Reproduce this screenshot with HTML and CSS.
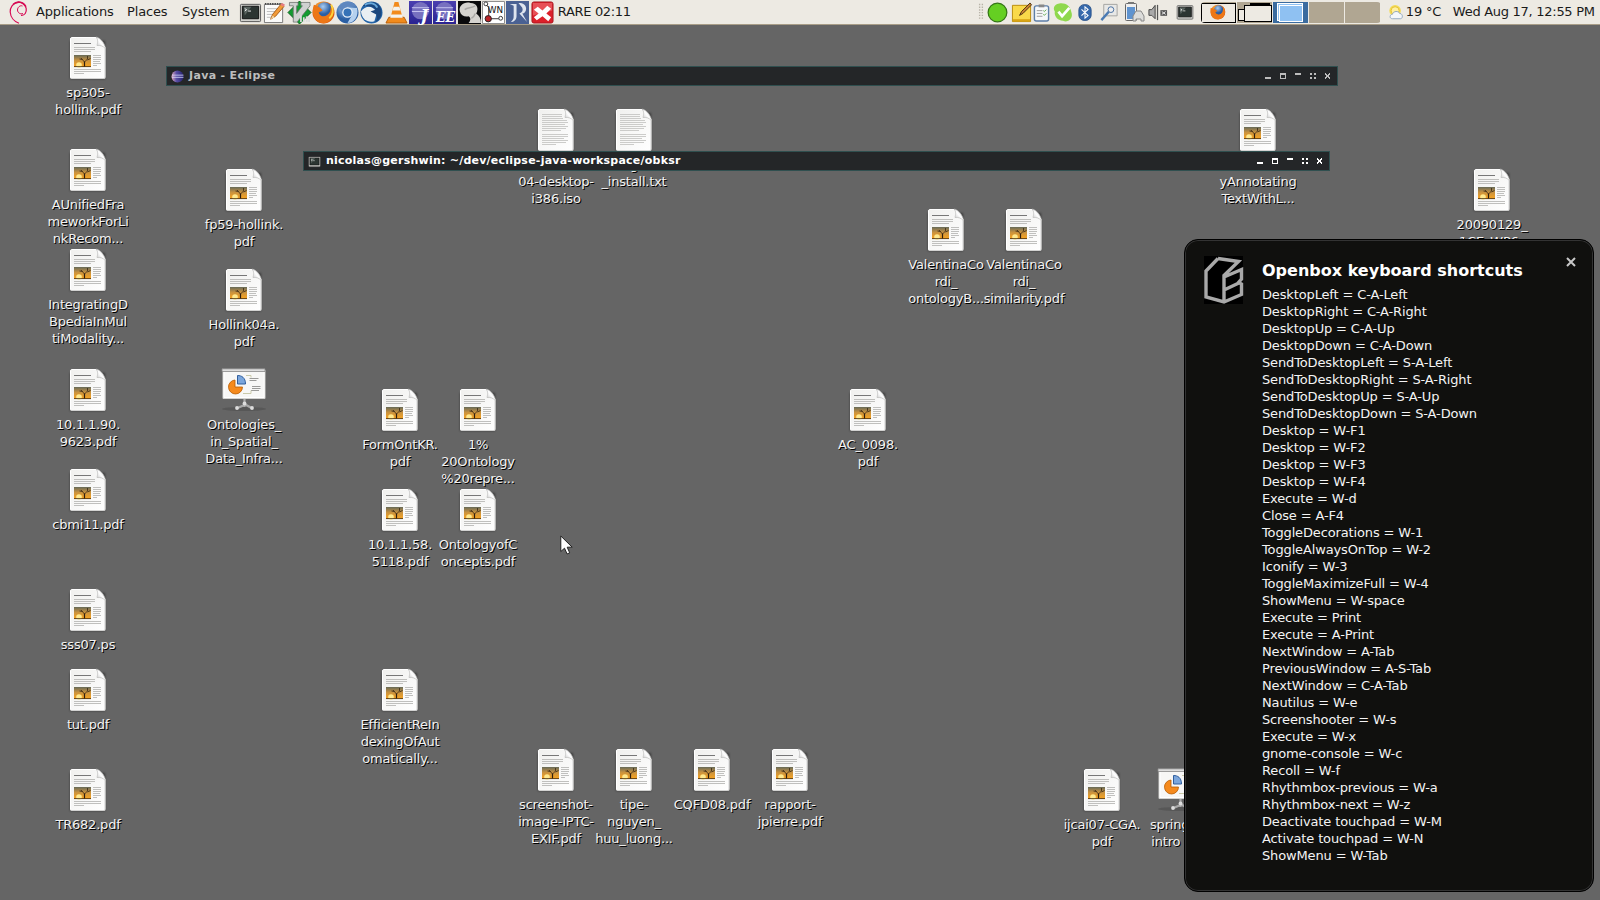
FILE: index.html
```html
<!DOCTYPE html>
<html lang="en">
<head>
<meta charset="utf-8">
<title>Desktop</title>
<link rel="stylesheet" href="styles.css">
</head>
<body>
<svg class="defs" width="0" height="0" aria-hidden="true">
  <defs>
    <linearGradient id="paper" x1="0" y1="0" x2="1" y2="1"><stop offset="0" stop-color="#f0f0ee"/><stop offset="1" stop-color="#fff"/></linearGradient>
    <linearGradient id="sunset" x1="0" y1="0" x2="0" y2="1"><stop offset="0" stop-color="#666a58"/><stop offset=".45" stop-color="#c9923e"/><stop offset="1" stop-color="#fba51f"/></linearGradient>
    <linearGradient id="curl" x1="0" y1="1" x2="1" y2="0"><stop offset="0" stop-color="#bbb"/><stop offset=".5" stop-color="#fff"/><stop offset="1" stop-color="#bbb"/></linearGradient>
    <linearGradient id="orb" x1="0" y1="0" x2="1" y2="0"><stop offset="0" stop-color="#e3a9c0"/><stop offset=".4" stop-color="#5a4fa5"/><stop offset="1" stop-color="#23206f"/></linearGradient>
    <radialGradient id="blue" cx=".4" cy=".3"><stop offset="0" stop-color="#a9cbf0"/><stop offset="1" stop-color="#2b5fa3"/></radialGradient>
    <radialGradient id="fire" cx=".4" cy=".3"><stop offset="0" stop-color="#ffc24a"/><stop offset="1" stop-color="#dc5a0c"/></radialGradient>
    <linearGradient id="tile" x1="0" y1="0" x2="0" y2="1"><stop offset="0" stop-color="#4a3fb0"/><stop offset="1" stop-color="#2a2391"/></linearGradient>
    <filter id="soft" x="-20%" y="-20%" width="140%" height="150%"><feGaussianBlur stdDeviation="1.2"/></filter>
    <symbol id="page" viewBox="0 0 48 48">
      <path d="M6 6h35v38H6z" fill="#000" opacity=".45" filter="url(#soft)"/>
      <path d="M7.500 2.500h24.500l9 10v29.500a1.500 1.500 0 0 1-1.500 1.500h-32a1.500 1.500 0 0 1-1-1.500v-38a1.500 1.500 0 0 1 1-1.500z" fill="url(#paper)" stroke="#fff"/>
      <path d="M6.500 43.500h34.500V13" fill="none" stroke="#c8c8c6" stroke-width=".8"/>
      <path d="M32 2c2.500 2.500 1.500 6 1 8.500 3-.5 6 .5 8.500 3C41 8 36 2.500 32 2z" fill="url(#curl)" stroke="#b5b5b3" stroke-width=".6"/>
    </symbol>
    <symbol id="doc" viewBox="0 0 48 48">
      <use href="#page"/>
      <path d="M10 8.500h17" stroke="#777"/>
      <path d="M10 12.500h21M10 14.500h21M10 16.500h17M29 20.500h8M29 22.500h8M29 24.500h8M29 26.500h7M29 28.500h8M29 30.500h4M10 34.500h27M10 36.500h27M10 38.500h10" stroke="#b9b9b7" stroke-width=".9"/>
      <path d="M10 20h17v12H10z" fill="url(#sunset)"/>
      <circle cx="15" cy="30" r="2.800" fill="#ffe98e"/>
      <path d="M10 31.600h17" stroke="#3a2713" stroke-width=".8"/>
      <path d="M20.500 31.500v-5" stroke="#2e1e10" stroke-width="1.200"/>
      <path d="M20.500 27l-3.500-4M20.500 27l3-3v-3M23.500 25l3-1.500M18.500 24.500l-3-.5" stroke="#3a2713" stroke-width=".8" fill="none"/>
    </symbol>
    <symbol id="txt" viewBox="0 0 48 48">
      <use href="#page"/>
      <path d="M10 7.500h20M10 9.500h20M10 11.500h21M10 13.500h25M10 15.500h26M10 17.500h23M10 19.500h26M10 21.500h24M10 23.500h19M10 27.500h26M10 29.500h26M10 31.500h22M10 33.500h26M10 35.500h24M10 37.500h14" stroke="#c6c6c4" stroke-width=".9"/>
    </symbol>
    <symbol id="slides" viewBox="0 0 48 48">
      <ellipse cx="24" cy="42" rx="22" ry="2" fill="#444" opacity=".4"/>
      <path d="M24.500 32v6l-7 3M24.500 37l7 4M24.500 38v2" stroke="#aaa" stroke-width="2.200" fill="none"/>
      <circle cx="17" cy="41" r="1.900" fill="#ddd"/><circle cx="32" cy="41" r="1.900" fill="#ddd"/><circle cx="24.500" cy="36.500" r="1.900" fill="#ddd"/>
      <path d="M3 3h42v28.500H3z" fill="#f7f7f6" stroke="#d0d0ce"/>
      <path d="M4 4h40v26.500H4z" fill="none" stroke="#fff"/>
      <path d="M2 1.800h43v2.700H2z" fill="#ddd" stroke="#888" stroke-width=".8"/>
      <path d="M15 13v7h7.500a7 7 0 1 1-7.500-7z" fill="#f58a1d" stroke="#b85c00" stroke-width=".8"/>
      <path d="M17.500 8.500c4 0 8 2 8 8.500h-8z" fill="#7ba6dc" stroke="#2f5e9e"/>
      <path d="M29.500 11.500h9M29.500 13.500h7M32 19.500h8.500M32 21.500h8.500M31 23.500h8" stroke="#9a9a98"/>
      <path d="M26 8.500h5v2M23 26.500h8v-3" fill="none" stroke="#c9c9a9"/>
    </symbol>
    <symbol id="term" viewBox="0 0 24 24">
      <rect x="1.500" y="3.500" width="21" height="18" rx="1" fill="#d3d3cf" stroke="#555"/>
      <path d="M3.500 5.500h17v13h-17z" fill="#2c3532" stroke="#111"/>
      <path d="M5 6h8l-7 9z" fill="#59635f"/><path d="M6 8l2 1-2 1.500M9.500 10.500h3" fill="none" stroke="#eee"/>
    </symbol>
    <symbol id="eclipse" viewBox="0 0 24 24">
      <circle cx="12" cy="12" r="11" fill="url(#orb)"/>
      <path d="M2 9.500h21M1.500 13.500h21.500" stroke="#d8d8fa" stroke-width="1.500"/>
    </symbol>
  </defs>
</svg>

<header class="panel">
  <svg class="debian" viewBox="0 0 20 24"><path d="M14 13.500c-2.500 1.200-5.500-.8-5.500-3.500s2.500-5 5-4" fill="none" stroke="#d70a53" stroke-width="1"/><path d="M12 15.300c3.800.4 5.800-3 5.200-6.800C16.500 4.500 12.500 1.600 8.500 2.300 3.800 3.200 1 7.500 1.200 12c.3 5 4 9.500 8.800 11.300" fill="none" stroke="#d70a53" stroke-width="1.200"/><path d="M4 4.500C8 .8 14.500 1.500 16.800 6.500" fill="none" stroke="#d70a53" stroke-width="1.600"/></svg>
  <nav class="menus"><span class="m-apps">Applications</span><span class="m-places">Places</span><span class="m-system">System</span></nav>
  <div class="launchers">
    <svg viewBox="0 0 24 24"><use href="#term"/></svg>
    <svg viewBox="0 0 24 24"><path d="M1.500 3.500h19v19h-19z" fill="#fbfbfa" stroke="#777"/><path d="M2 3h18" stroke="#444" stroke-width="2" stroke-dasharray="1.500 1"/><path d="M4 8h13M4 11h10M4 14h7M4 17h7" stroke="#bbb"/><path d="M8 19l2-5L19 3l3 2.500L13 16z" fill="#f29b38" stroke="#a75a13"/><path d="M18 4l2-2 3 2-1.500 2z" fill="#e57c80"/><path d="M8 19l2-4 2.500 2z" fill="#f1d3a0"/></svg>
    <svg viewBox="0 0 24 24"><path d="M12 0l12 12-12 12L0 12z" fill="#129b30" stroke="#075d1b"/><path d="M1.500 1.500h9v3.500H9v8l6-8h-1.500V1.500h9.500V5L9.500 22H5.500V5h-4z" fill="#cfd1d0" stroke="#6b706d" stroke-width=".8"/><path d="M13.500 15v7M16.500 22v-5M19.500 22v-5l2.500.5V22" stroke="#ddd" stroke-width="1.800" fill="none"/></svg>
    <svg viewBox="0 0 24 24"><circle cx="12" cy="12" r="11.500" fill="url(#fire)"/><circle cx="13" cy="9" r="7.800" fill="url(#blue)"/><path d="M2 4c4 1 8 4 9 6l-4 2c2 6 9 5 12-1l1-7c5 7 2 17-6 19C5 25-2 15 2 4z" fill="#ed7716"/><path d="M20 4c3 5 2 11-2 14" stroke="#ffd43c" stroke-width="2" fill="none"/></svg>
    <svg viewBox="0 0 24 24"><circle cx="12" cy="12" r="11.500" fill="url(#blue)"/><path d="M12 6h10A11 11 0 0 0 3 6l4 7z" fill="#5e87bf"/><path d="M17 14l-5 9c7 0 12-7 10-16h-8z" fill="#b5d1ef"/><circle cx="12" cy="12" r="5.500" fill="#e7f0fa"/><circle cx="12" cy="12" r="4.200" fill="#3572b7"/></svg>
    <svg viewBox="0 0 24 24"><circle cx="12" cy="12" r="11.500" fill="#2364a8"/><path d="M1 11c3-5 9-6 12-4l5 4-3 10c-6 2-13-1-14-10z" fill="#e9eff3"/><path d="M3 5C7-1 18 0 21 6c4 8-1 15-5 16 2-3 2-5 1-8l-6-3 5-2c-3-4-8-3-13-4z" fill="#1b477e"/><path d="M5 4c5-3 11-2 13 3" stroke="#67a9dc" stroke-width="2" fill="none"/></svg>
    <svg viewBox="0 0 24 24"><path d="M4 17h16l3 6H1z" fill="#f08b1c" stroke="#b75c08"/><path d="M10 1h4l5 19c-4 2-10 2-14 0z" fill="#f28b1d"/><path d="M9 6h6l1.200 4H7.800zM6.500 14h11l1 3.500h-13z" fill="#f4f3ef"/></svg>
    <svg viewBox="0 0 24 24"><path d="M0 0h24v24H0z" fill="url(#tile)"/><circle cx="12" cy="10" r="9" fill="#7770bf"/><path d="M3 7h18M3 11h18" stroke="#cac6f2"/><text x="12" y="21" class="ic-serif">J</text></svg>
    <svg viewBox="0 0 24 24"><path d="M0 0h24v24H0z" fill="url(#tile)"/><circle cx="12" cy="10" r="9" fill="#7770bf"/><path d="M3 7h18M3 11h18" stroke="#cac6f2"/><text x="3" y="22" class="ic-serif ic-ee" textLength="20" lengthAdjust="spacingAndGlyphs">EE</text></svg>
    <svg viewBox="0 0 24 24"><path d="M0 0h24v24H0z" fill="#0a0a0c"/><path d="M2 11c-2-6 5-11 11-9 7 0 9 6 6 11 3 2 5 5 5 10H11c3-3 2-6 0-7-4 1-8-1-9-5z" fill="#d5d3cf"/><path d="M7 9c3-3 7-1 11-4M14 18c2-1 3-2 4-5" stroke="#aaa8a5" stroke-width="1.500" fill="none"/></svg>
    <svg viewBox="0 0 24 24"><path d="M.5.500h23v23H.500z" fill="#fff" stroke="#888"/><path d="M4 3l3 4v13M8 18.500h12" stroke="#333" fill="none"/><circle cx="6.500" cy="18.500" r="3.300" fill="#ba2227" stroke="#222"/><circle cx="19.500" cy="18" r="2" fill="#fff" stroke="#333"/><circle cx="4" cy="3" r="2" fill="#fff" stroke="#333"/><text x="6" y="13" class="ic-wn" textLength="16" lengthAdjust="spacingAndGlyphs">WN</text></svg>
    <svg viewBox="0 0 24 24"><path d="M0 0h24v24H0z" fill="#4a6193"/><path d="M4 3h7v13c0 4-3 6-6 6 3-3 3-4 3-7V5zM13 2c5 0 8 2 8 6 0 3-2 5-4 5l5 9-8-9c3-1 4-3 3-6z" fill="#dfe5ef"/></svg>
    <svg viewBox="0 0 24 24"><rect x="1" y="1" width="22" height="22" rx="2" fill="#dc202a" stroke="#a71920"/><path d="M2 2h20v8L2 15z" fill="#ef7377" opacity=".6"/><path d="M3 9l4-3 5 4 5-5 4 3-5 5 5 4-3 4-6-5-6 4-3-3 5-4z" fill="#fff"/></svg>
  </div>
  <span class="rare">RARE 02:11</span>

  <div class="tray">
    <svg class="grip" viewBox="0 0 6 22"><path d="M1.500 2v18M4.500 2v18" stroke="#b8b3a8" stroke-width="1.500" stroke-dasharray="1.500 1.500"/></svg>
    <svg class="t1" viewBox="0 0 22 22"><circle cx="11" cy="11" r="9.800" fill="#65cf22" stroke="#347615" stroke-width="1.300"/></svg>
    <svg class="t2" viewBox="0 0 22 22"><path d="M1.500 3.500h19v17h-19z" fill="#f9d94a" stroke="#b98a0a"/><path d="M2 18h18v2.500H2z" fill="#d9a514"/><path d="M9 14l2-4 9-9 1.500 2-9 9z" fill="#c98232" stroke="#4e3214"/></svg>
    <svg class="t3" viewBox="0 0 18 20"><rect x="1.500" y="3" width="15" height="16" rx="2" fill="#f6f8fa" stroke="#5d7ea8" stroke-width="1.500"/><path d="M6 1.500h6v3H6z" fill="#888"/><path d="M4 8h6M4 11h6M4 14h6" stroke="#9a9a9a"/><path d="M11 8l1 1 2-2M11 12l1 1 2-2" stroke="#53a13b" fill="none"/></svg>
    <svg class="t4" viewBox="0 0 22 22"><path d="M7 1c7-1 12 3 13 9 3 7-3 13-9 10C5 20 1 15 2 10-1 5 3 1 7 1z" fill="#8fd84d"/><path d="M6 10l4 5 8-9" stroke="#fff" stroke-width="3" fill="none"/></svg>
    <svg class="t5" viewBox="0 0 16 20"><rect x="1" y="1" width="14" height="18" rx="6" fill="#3669ac" stroke="#254f88"/><path d="M4 6.500l7.500 7L8 16.500v-13l3.500 3-7.500 7" fill="none" stroke="#fff" stroke-width="1.200"/></svg>
    <svg class="t6" viewBox="0 0 20 22"><path d="M4.500 2.500h14v12h-14z" fill="#e8e8e6" stroke="#a3a3a0"/><path d="M2 19l8-9" stroke="#4a7ab3" stroke-width="2.500"/><circle cx="12" cy="8" r="3" fill="#eee" stroke="#456da0"/></svg>
    <svg class="t7" viewBox="0 0 22 22"><rect x="2.500" y="2.500" width="11" height="17" rx="1" fill="#eee" stroke="#666"/><path d="M5 1h6v2H5z" fill="#777"/><path d="M4 6h8v12H4z" fill="#5f93cf"/><path d="M10 20v-5l3-5h5l3 5v5h-3v-2h-5v2z" fill="#dcdcda" stroke="#888"/></svg>
    <svg class="t8" viewBox="0 0 22 22"><path d="M1.500 8h3L8 3.500v14L4.500 14h-3z" fill="#aaa" stroke="#444"/><path d="M10.500 3v16" stroke="#555" stroke-width="1.300"/><path d="M13.500 8.500h7v6h-7z" fill="#555"/><path d="M15 10l4 3M19 10l-4 3" stroke="#eee"/></svg>
    <svg class="t9" viewBox="0 0 24 24"><use href="#term"/></svg>
  </div>

  <div class="pager">
    <div class="ws"><span class="ws-full"></span><svg viewBox="0 0 24 24"><circle cx="12" cy="12" r="11" fill="url(#fire)"/><circle cx="13" cy="9" r="7" fill="url(#blue)"/><path d="M1 6c5 1 8 2 10 5l-3 1c2 6 9 5 11-1l1-7c5 7 2 17-6 19C4 25-1 16 1 6z" fill="#ed7716"/></svg></div>
    <div class="ws"><span class="w-a"></span><span class="w-b"></span><span class="w-c"></span></div>
    <div class="ws active"><span class="w-d"></span><span class="w-e"></span></div>
    <div class="ws"></div>
    <div class="ws"></div>
  </div>
  <svg class="weather" viewBox="0 0 18 18"><circle cx="8" cy="7" r="6.500" fill="#f3db55"/><circle cx="8" cy="7" r="4.500" fill="#fff0a0" stroke="#e3bd31"/><path d="M5 16c-4 0-3-5 0-5 1-4 7-4 8-1 4 0 4 6 1 6z" fill="#f4f7fa" stroke="#8ba3bb"/></svg>
  <span class="temp">19 °C</span>
  <span class="clock">Wed Aug 17, 12:55 PM</span>
</header>

<main class="desktop">
  <figure class="item" style="--x:88px;--y:35px"><svg><use href="#doc"/></svg><figcaption>sp305-<br>hollink.pdf</figcaption></figure>
  <figure class="item" style="--x:88px;--y:147px"><svg><use href="#doc"/></svg><figcaption>AUnifiedFra<br>meworkForLi<br>nkRecom...</figcaption></figure>
  <figure class="item" style="--x:88px;--y:247px"><svg><use href="#doc"/></svg><figcaption>IntegratingD<br>BpediaInMul<br>tiModality...</figcaption></figure>
  <figure class="item" style="--x:88px;--y:367px"><svg><use href="#doc"/></svg><figcaption>10.1.1.90.<br>9623.pdf</figcaption></figure>
  <figure class="item" style="--x:88px;--y:467px"><svg><use href="#doc"/></svg><figcaption>cbmi11.pdf</figcaption></figure>
  <figure class="item" style="--x:88px;--y:587px"><svg><use href="#doc"/></svg><figcaption>sss07.ps</figcaption></figure>
  <figure class="item" style="--x:88px;--y:667px"><svg><use href="#doc"/></svg><figcaption>tut.pdf</figcaption></figure>
  <figure class="item" style="--x:88px;--y:767px"><svg><use href="#doc"/></svg><figcaption>TR682.pdf</figcaption></figure>
  <figure class="item" style="--x:244px;--y:167px"><svg><use href="#doc"/></svg><figcaption>fp59-hollink.<br>pdf</figcaption></figure>
  <figure class="item" style="--x:244px;--y:267px"><svg><use href="#doc"/></svg><figcaption>Hollink04a.<br>pdf</figcaption></figure>
  <figure class="item" style="--x:244px;--y:367px"><svg><use href="#slides"/></svg><figcaption>Ontologies_<br>in_Spatial_<br>Data_Infra...</figcaption></figure>
  <figure class="item" style="--x:400px;--y:387px"><svg><use href="#doc"/></svg><figcaption>FormOntKR.<br>pdf</figcaption></figure>
  <figure class="item" style="--x:478px;--y:387px"><svg><use href="#doc"/></svg><figcaption>1%<br>20Ontology<br>%20repre...</figcaption></figure>
  <figure class="item" style="--x:400px;--y:487px"><svg><use href="#doc"/></svg><figcaption>10.1.1.58.<br>5118.pdf</figcaption></figure>
  <figure class="item" style="--x:478px;--y:487px"><svg><use href="#doc"/></svg><figcaption>OntologyofC<br>oncepts.pdf</figcaption></figure>
  <figure class="item" style="--x:400px;--y:667px"><svg><use href="#doc"/></svg><figcaption>EfficientReIn<br>dexingOfAut<br>omatically...</figcaption></figure>
  <figure class="item" style="--x:556px;--y:107px"><svg><use href="#txt"/></svg><figcaption><br>04-desktop-<br>i386.iso</figcaption></figure>
  <figure class="item" style="--x:634px;--y:107px"><svg><use href="#txt"/></svg><figcaption>g<br>_install.txt</figcaption></figure>
  <figure class="item" style="--x:556px;--y:747px"><svg><use href="#doc"/></svg><figcaption>screenshot-<br>image-IPTC-<br>EXIF.pdf</figcaption></figure>
  <figure class="item" style="--x:634px;--y:747px"><svg><use href="#doc"/></svg><figcaption>tipe-<br>nguyen_<br>huu_luong...</figcaption></figure>
  <figure class="item" style="--x:712px;--y:747px"><svg><use href="#doc"/></svg><figcaption>CQFD08.pdf</figcaption></figure>
  <figure class="item" style="--x:790px;--y:747px"><svg><use href="#doc"/></svg><figcaption>rapport-<br>jpierre.pdf</figcaption></figure>
  <figure class="item" style="--x:868px;--y:387px"><svg><use href="#doc"/></svg><figcaption>AC_0098.<br>pdf</figcaption></figure>
  <figure class="item" style="--x:946px;--y:207px"><svg><use href="#doc"/></svg><figcaption>ValentinaCo<br>rdi_<br>ontologyB...</figcaption></figure>
  <figure class="item" style="--x:1024px;--y:207px"><svg><use href="#doc"/></svg><figcaption>ValentinaCo<br>rdi_<br>similarity.pdf</figcaption></figure>
  <figure class="item" style="--x:1258px;--y:107px"><svg><use href="#doc"/></svg><figcaption><br>yAnnotating<br>TextWithL...</figcaption></figure>
  <figure class="item" style="--x:1492px;--y:167px"><svg><use href="#doc"/></svg><figcaption>20090129_<br>1CE_WP6_</figcaption></figure>
  <figure class="item" style="--x:1102px;--y:767px"><svg><use href="#doc"/></svg><figcaption>ijcai07-CGA.<br>pdf</figcaption></figure>
  <figure class="item" style="--x:1180px;--y:767px"><svg><use href="#slides"/></svg><figcaption>spring09-<br>intro .pdf</figcaption></figure>

  <section class="window win-java">
    <svg class="win-icon" viewBox="0 0 24 24"><use href="#eclipse"/></svg>
    <h2>Java - Eclipse</h2>
    <svg class="controls" viewBox="0 0 68 8" shape-rendering="crispEdges"><path d="M0 5h6v2H0zM15 1h6v6h-6zm1 2v3h4V3zM30 1h6v2h-6zM45 1h2v2h-2zM49 1h2v2h-2zM45 5h2v2h-2zM49 5h2v2h-2z" fill="currentColor" fill-rule="evenodd"/><path d="M60 1.500l5 5M65 1.500l-5 5" stroke="currentColor"/></svg>
  </section>
  <section class="window win-term">
    <svg class="win-icon" viewBox="0 0 24 24"><use href="#term"/></svg>
    <h2>nicolas@gershwin: ~/dev/eclipse-java-workspace/obksr</h2>
    <svg class="controls" viewBox="0 0 68 8" shape-rendering="crispEdges"><path d="M0 5h6v2H0zM15 1h6v6h-6zm1 2v3h4V3zM30 1h6v2h-6zM45 1h2v2h-2zM49 1h2v2h-2zM45 5h2v2h-2zM49 5h2v2h-2z" fill="currentColor" fill-rule="evenodd"/><path d="M60 1.500l5 5M65 1.500l-5 5" stroke="currentColor"/></svg>
  </section>

  <aside class="notice">
    <svg class="ob-logo" viewBox="0 0 39 48"><path d="M0 0h39v48H0z" fill="#000"/><path d="M14 2.500l20.500 3L20 19.500V45M14 2.500L2 15v26l18 5 17.500-7.500V28l-3-1.500 3-3.500v-9.500L20 21M20 34l17-8M20 45V20" fill="none" stroke="#a9a9a9" stroke-width="3.400"/></svg>
    <div class="notice-body">
      <h1>Openbox keyboard shortcuts</h1>
      <p>DesktopLeft = C-A-Left<br>DesktopRight = C-A-Right<br>DesktopUp = C-A-Up<br>DesktopDown = C-A-Down<br>SendToDesktopLeft = S-A-Left<br>SendToDesktopRight = S-A-Right<br>SendToDesktopUp = S-A-Up<br>SendToDesktopDown = S-A-Down<br>Desktop = W-F1<br>Desktop = W-F2<br>Desktop = W-F3<br>Desktop = W-F4<br>Execute = W-d<br>Close = A-F4<br>ToggleDecorations = W-1<br>ToggleAlwaysOnTop = W-2<br>Iconify = W-3<br>ToggleMaximizeFull = W-4<br>ShowMenu = W-space<br>Execute = Print<br>Execute = A-Print<br>NextWindow = A-Tab<br>PreviousWindow = A-S-Tab<br>NextWindow = C-A-Tab<br>Nautilus = W-e<br>Screenshooter = W-s<br>Execute = W-x<br>gnome-console = W-c<br>Recoll = W-f<br>Rhythmbox-previous = W-a<br>Rhythmbox-next = W-z<br>Deactivate touchpad = W-M<br>Activate touchpad = W-N<br>ShowMenu = W-Tab</p>
    </div>
    <svg class="close" viewBox="0 0 10 10"><path d="M1 1l8 8M9 1L1 9" stroke="#c8c8c8" stroke-width="2"/></svg>
  </aside>

  <svg class="cursor" viewBox="0 0 13 20"><path d="M.8 1v15.500l3.700-3.300 2.600 5.800 2.600-1.200-2.500-5.600h5z" fill="#fff" stroke="#222"/></svg>
</main>
</body>
</html>
```
FILE: styles.css
```css
* { box-sizing: border-box; }
body {
  margin: 0;
  width: 1600px;
  height: 900px;
  overflow: hidden;
  display: flex;
  flex-direction: column;
  background: #656565;
  font: 13px/17px "DejaVu Sans", sans-serif;
  color: #1a1a1a;
}
svg { display: block; flex: none; overflow: visible; }
.defs { position: absolute; }
h1, h2, p, figure { margin: 0; }

/* top panel */
.panel {
  flex: none;
  height: 25px;
  display: flex;
  align-items: center;
  background: #edeae3;
  border-bottom: 1px solid #a89d87;
  white-space: nowrap;
}
.panel > span, .menus { padding-bottom: 1px; }
.debian { width: 20px; height: 24px; margin-left: 9px; }
.menus { display: flex; width: 203px; margin-left: 7px; letter-spacing: -.15px; }
.m-apps { width: 91px; }
.m-places { width: 55px; }
.launchers { display: flex; }
.launchers svg { width: 23px; height: 23px; margin-right: 1.300px; }
.ic-serif { font: italic bold 17px "DejaVu Serif", serif; fill: #fff; letter-spacing: 0; }
.ic-ee { font-size: 15px; }
.ic-wn { font: 10px "DejaVu Sans", sans-serif; fill: #111; }
.rare { width: 420px; margin-left: 3px; letter-spacing: -.35px; }
.tray { display: flex; align-items: center; width: 223px; }
.grip { width: 6px; height: 20px; margin-right: 3px; }
.t1 { width: 21px; height: 21px; margin-right: 3px; }
.t2 { width: 21px; height: 21px; margin-right: 1px; }
.t3 { width: 17px; height: 19px; margin-right: 3px; }
.t4 { width: 20px; height: 21px; margin-right: 5px; }
.t5 { width: 14px; height: 19px; margin-right: 7px; }
.t6 { width: 20px; height: 21px; margin-right: 4px; }
.t7 { width: 22px; height: 22px; margin-right: 2px; }
.t8 { width: 22px; height: 21px; margin-right: 7px; }
.t9 { width: 18px; height: 18px; }

.pager {
  display: grid;
  grid-template-columns: repeat(5, 35px);
  gap: 1px;
  width: 180px;
  height: 21px;
  background: #edeae3;
  border-radius: 4px;
  overflow: hidden;
}
.ws { position: relative; background: #b0a692; }
.ws.active { background: #3a6b9f; }
.ws span, .ws svg { position: absolute; }
.ws-full { inset: 1px 0 0 0; border: 1px solid #000; background: #edeae3; }
.ws svg { left: 9px; top: 2px; width: 16px; height: 16px; }
.w-a { left: 13px; top: 1px; width: 20px; height: 5px; background: #000; }
.w-b { left: 1px; top: 7px; width: 14px; height: 12px; border: 1px solid #000; background: #edeae3; }
.w-c { left: 7px; top: 3px; width: 28px; height: 17px; border: 1px solid #000; background: #edeae3; }
.w-d { left: 4px; top: 1px; width: 26px; height: 18px; border: 1px solid #fff; background: #8fc1f2; }
.w-e { left: 6px; top: 3px; width: 24px; height: 17px; border: 1px solid #fff; background: #8fc1f2; }
.weather { width: 16px; height: 17px; margin-left: 7px; }
.temp { width: 47px; margin-left: 2px; letter-spacing: -.2px; }
.clock { letter-spacing: -.28px; }

/* desktop surface */
.desktop { flex: 1; }
.item {
  position: absolute;
  left: var(--x);
  top: var(--y);
  width: 90px;
  margin-left: -45px;
  display: flex;
  flex-direction: column;
  align-items: center;
  color: #f2f2f2;
  letter-spacing: -.2px;
  text-align: center;
  white-space: nowrap;
  text-shadow: 1px 1px 0 #000;
}
.item svg { width: 48px; height: 48px; }
.item figcaption { margin-top: 1px; }

.window {
  position: absolute;
  height: 20px;
  display: flex;
  align-items: center;
  padding: 0 4px;
  background: #242628;
  border: 1px solid #2f4f4f;
  color: #bdbdbd;
}
.window h2 {
  flex: 1;
  margin-left: 5px;
  padding-bottom: 2px;
  font: bold 11px/17px "DejaVu Sans", sans-serif;
  letter-spacing: .23px;
}
.win-icon { width: 13px; height: 13px; }
.controls { width: 68px; height: 8px; }
.win-java { left: 166px; top: 66px; width: 1172px; }
.win-java h2 { letter-spacing: .32px; }
.win-term { left: 303px; top: 151px; width: 1027px; color: #fff; }

/* notification bubble */
.notice {
  position: absolute;
  left: 1184px;
  top: 239px;
  width: 410px;
  height: 653px;
  display: flex;
  padding: 16px 17px 0 19px;
  background: #10100e;
  border: 1px solid #000;
  border-radius: 14px;
  box-shadow: inset 0 0 0 1px #333;
  color: #f4f4f4;
}
.ob-logo { width: 39px; height: 48px; }
.notice-body { flex: 1; margin-left: 19px; padding-top: 4px; }
.notice h1 { font: bold 16px/22px "DejaVu Sans", sans-serif; color: #fff; }
.notice p { margin-top: 4px; letter-spacing: -.14px; }
.close { width: 10px; height: 10px; margin-top: 1px; }
.cursor { position: absolute; left: 560px; top: 535px; width: 13px; height: 20px; }
```
